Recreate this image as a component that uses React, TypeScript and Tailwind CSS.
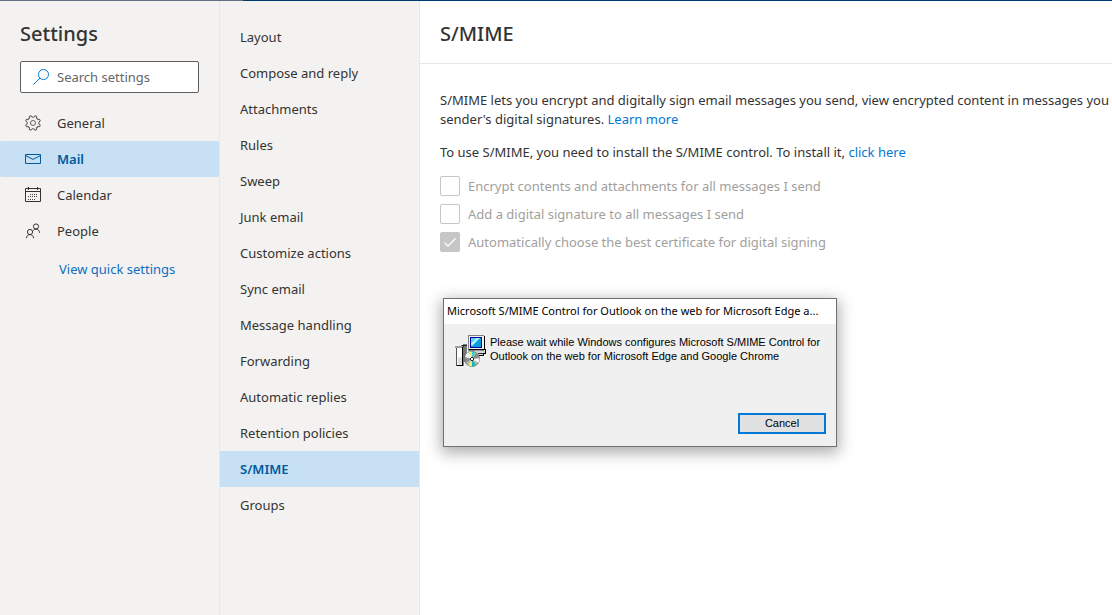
import React from 'react';

const categories = [
  { label: 'General', icon: <GearIcon /> },
  { label: 'Mail', icon: <MailIcon />, active: true },
  { label: 'Calendar', icon: <CalendarIcon /> },
  { label: 'People', icon: <PeopleIcon /> },
];

const sections = [
  'Layout',
  'Compose and reply',
  'Attachments',
  'Rules',
  'Sweep',
  'Junk email',
  'Customize actions',
  'Sync email',
  'Message handling',
  'Forwarding',
  'Automatic replies',
  'Retention policies',
  'S/MIME',
  'Groups',
];

const options = [
  { id: 'encrypt', label: 'Encrypt contents and attachments for all messages I send', checked: false },
  { id: 'sign', label: 'Add a digital signature to all messages I send', checked: false },
  { id: 'auto', label: 'Automatically choose the best certificate for digital signing', checked: true },
];

function GearIcon() {
  const teeth = [22.5, 67.5, 112.5, 157.5, 202.5, 247.5, 292.5, 337.5];
  return (
    <svg viewBox="0 0 16 16" className="size-4" fill="none" stroke="currentColor" aria-hidden="true">
      {teeth.map((a) => (
        <path key={a} transform={`rotate(${a} 8 8)`} d="M5.600 2.200 L6.600 2.500 L7 0.500 H9 L9.400 2.500 L10.400 2.200" strokeWidth="0.750" />
      ))}
      <circle cx="8" cy="8" r="2.500" strokeWidth="0.750" />
    </svg>
  );
}

function MailIcon() {
  return (
    <svg viewBox="0 0 16 16" className="size-4" fill="none" stroke="currentColor" aria-hidden="true">
      <path d="M0.500 3.500h15v9H0.500z" />
      <path d="M0.500 4.500 L8 8.400 L15.500 4.500" />
    </svg>
  );
}

function CalendarIcon() {
  return (
    <svg viewBox="0 0 16 16" className="size-4" fill="none" stroke="currentColor" aria-hidden="true">
      <path d="M0.500 1.500h15v13H0.500zM0.500 4.500h15M3.500 0v3M12.500 0v3" />
      <path d="M5 7.500h8M3 9.500h10M3 12.500h8" strokeDasharray="1 1" strokeWidth="0.900" />
    </svg>
  );
}

function PeopleIcon() {
  return (
    <svg viewBox="0 0 16 16" className="size-4" fill="none" stroke="currentColor" aria-hidden="true">
      <circle cx="11" cy="3.500" r="2.600" />
      <circle cx="5" cy="9" r="2.600" />
      <path d="M1.500 15.200c0-2.200 1.500-3.600 3.500-3.600s3.500 1.400 3.500 3.600M8 7.600c.7-1 1.700-1.500 3-1.500 2 0 3.500 1.500 3.500 3.700" />
    </svg>
  );
}

function SearchIcon() {
  return (
    <svg viewBox="0 0 16 16" className="size-4 shrink-0 text-[#0078d4]" fill="none" stroke="currentColor" aria-hidden="true">
      <circle cx="10.500" cy="5.500" r="5" />
      <path d="M7 9 L0.500 15.500" />
    </svg>
  );
}

function InstallerIcon() {
  return (
    <svg viewBox="0 0 32 32" className="size-8 shrink-0" shapeRendering="crispEdges" aria-hidden="true">
      <path d="M6 10h2V9h4v18H9v4H2V13H0v-2h6z" fill="#808080" />
      <path d="M0 11h8v2H0z" fill="#a0a0a0" />
      <path d="M7 10h5v1H7zM8 11h1v1H8zM10 12h1v1h-1z" fill="#222" />
      <path d="M7 12h1v19H2v-1h5z" fill="#000" />
      <path d="M2 13h5v17H2z" fill="#fff" />
      <path d="M1 13h1v18H1z" fill="#555" />
      <path d="M3 22h1v1h1v-1h1v1h1v7H6v-1H5v1H4v-1H3z" fill="#dcdcdc" />
      <path d="M8 12h3v15H8z" fill="#777" />
      <path d="M13 0h16v16H13z" fill="#808080" />
      <path d="M14 1h15v14H14z" fill="#f2f2f2" />
      <path d="M29 1h1v14H14v-1h15z" fill="#000" />
      <path d="M15 2h12v11H15z" fill="#0000a0" />
      <path d="M16 3h10v9H16z" fill="#0a9bdc" />
      <path d="M16 3h9v1h-1v1h-1v1h-1v1h-1v1h-1v1h-1v1h-1v1h-2z" fill="#52d3fa" />
      <path d="M21 3h3v1h-1v1h-1v1h-1v1h-1v1h-1v1h-1v1h-2V8h1V7h1V6h1V5h1V4h1z" fill="#b5f0ff" />
      <path d="M20 15h7v2h-7z" fill="#9a9a9a" />
      <path d="M13 16h17v4H13z" fill="#d5d5d5" />
      <path d="M30 14h1v5h-2v2h-9v-1h8v-2h2z" fill="#000" />
      <path d="M23 18h5v1h-5z" fill="#333" />
      <g shapeRendering="auto">
        <circle cx="17" cy="24" r="7.500" fill="#b4b4b4" stroke="#666" strokeWidth="0.800" />
        <path d="M17 24L13.500 17.200A7.500 7.500 0 0 1 17 16.500z" fill="#e9ec70" />
        <path d="M17 24L17 16.500A7.500 7.500 0 0 1 20.500 17.300z" fill="#40ccc8" />
        <path d="M17 24L10 21.500A7.500 7.500 0 0 1 13.500 17.200z" fill="#f4f4f4" />
        <path d="M17 24L10.500 27.500A7.500 7.500 0 0 1 9.500 23z" fill="#888" />
        <path d="M17 24L17 31.400A7.500 7.500 0 0 1 13 30.300z" fill="#e9ec70" />
        <path d="M17 24L21 30.300A7.500 7.500 0 0 1 17 31.400z" fill="#16b8bb" />
        <path d="M17 24L24.400 23.500A7.500 7.500 0 0 1 23.500 27.800z" fill="#fafafa" />
        <path d="M17 24L21.500 18A7.500 7.500 0 0 1 24.400 22.500z" fill="#8b8b8b" />
      </g>
      <path d="M16 22h2v1h1v2h-1v1h-2v-1h-1v-2h1z" fill="#222" />
      <path d="M16 23h2v2h-2z" fill="#fff" />
    </svg>
  );
}

function InstallerDialog() {
  return (
    <section
      role="dialog"
      aria-labelledby="installer-title"
      className="absolute left-[443px] top-[298px] flex w-[394px] flex-col border border-[#707070] bg-[#f0f0f0] text-black shadow-[0_4px_14px_2px_rgba(0,0,0,0.32)]"
    >
      <h2 id="installer-title" className="h-[25px] whitespace-nowrap bg-white px-[3px] font-['Noto_Sans','Open_Sans',sans-serif] text-[11px] leading-[23px]">
        Microsoft S/MIME Control for Outlook on the web for Microsoft Edge a...
      </h2>
      <div className="flex gap-[3px] px-[11px] pt-[11px] font-['Liberation_Sans',Arial,sans-serif]">
        <InstallerIcon />
        <p className="whitespace-nowrap text-[11px] leading-[14px]">
          Please wait while Windows configures Microsoft S/MIME Control for
          <br />
          Outlook on the web for Microsoft Edge and Google Chrome
        </p>
      </div>
      <div className="flex justify-end px-[10px] pb-3 pt-[46px]">
        <button type="button" className="h-[21px] w-[88px] border-2 border-[#0078d7] bg-[#e1e1e1] font-['Liberation_Sans',Arial,sans-serif] text-[11px] leading-[17px]">
          Cancel
        </button>
      </div>
    </section>
  );
}

export default function App() {
  return (
    <div className="relative flex min-h-screen flex-col overflow-hidden bg-white font-['Noto_Sans','Open_Sans',sans-serif] text-[13px] leading-[19px] text-[#333]">
      <div className="flex h-px">
        <div className="w-[243px] bg-[#5f7085]" />
        <div className="flex-1 bg-[#003a6e]" />
      </div>
      <div className="flex flex-1">
        <aside className="flex w-[220px] shrink-0 flex-col border-r border-[#eae8e6] bg-[#f3f2f1]">
          <h1 className="px-5 pt-[21px] text-[20px] font-medium leading-6">Settings</h1>
          <div className="mx-5 mt-[15px] flex h-8 items-center gap-2 rounded-xs border border-[#605e5c] bg-white pl-3">
            <SearchIcon />
            <input
              type="text"
              aria-label="Search settings"
              placeholder="Search settings"
              className="w-full min-w-0 bg-transparent outline-none placeholder:text-[#666]"
            />
          </div>
          <nav aria-label="Categories" className="mt-3 flex flex-col">
            {categories.map((c) => (
              <button
                key={c.label}
                type="button"
                className={
                  c.active
                    ? 'flex h-9 items-center gap-4 rounded-xs bg-[#c7e0f4] pl-[25px] font-semibold text-[#005a9e]'
                    : 'flex h-9 items-center gap-4 pl-[25px]'
                }
              >
                {c.icon}
                {c.label}
              </button>
            ))}
          </nav>
          <a href="#quick" className="mt-[11px] pl-[59px] text-[#106ebe]">
            View quick settings
          </a>
        </aside>

        <nav aria-label="Mail settings" className="flex w-[200px] shrink-0 flex-col border-r border-[#eae8e6] bg-[#f3f2f1] pt-[18px]">
          {sections.map((s) => (
            <button
              key={s}
              type="button"
              className={
                s === 'S/MIME'
                  ? 'h-9 bg-[#c7e0f4] px-5 text-left font-semibold text-[#005a9e]'
                  : 'h-9 px-5 text-left'
              }
            >
              {s}
            </button>
          ))}
        </nav>

        <main className="min-w-0 flex-1 overflow-hidden">
          <header className="border-b border-[#eae8e6] px-5 pb-[17px] pt-[21px]">
            <h2 className="text-[20px] font-medium leading-6">S/MIME</h2>
          </header>
          <div className="whitespace-nowrap px-5 pt-[27px]">
            <p>
              S/MIME lets you encrypt and digitally sign email messages you send, view encrypted content in messages you
              <br />
              sender's digital signatures.{' '}
              <a href="#learn" className="text-[#0078d4]">Learn more</a>
            </p>
            <p className="mt-[14px]">
              To use S/MIME, you need to install the S/MIME control. To install it,{' '}
              <a href="#install" className="text-[#0078d4]">click here</a>
            </p>
            <div className="mt-[14px] flex flex-col gap-2">
              {options.map((o) => (
                <div key={o.id} className="flex h-5 items-center gap-2">
                  <div className="grid size-5 place-items-center">
                    <input
                      id={o.id}
                      type="checkbox"
                      disabled
                      defaultChecked={o.checked}
                      className="col-start-1 row-start-1 size-5 appearance-none rounded-xs border border-[#c8c6c4] bg-white checked:bg-[#c8c6c4]"
                    />
                    {o.checked && (
                      <svg viewBox="0 0 14 14" className="pointer-events-none col-start-1 row-start-1 size-[14px]" fill="none" stroke="#fff" strokeWidth="1.300" aria-hidden="true">
                        <path d="M1.500 7.500 L5 11 L12.500 3.500" />
                      </svg>
                    )}
                  </div>
                  <label htmlFor={o.id} className="text-[#a19f9d]">{o.label}</label>
                </div>
              ))}
            </div>
          </div>
        </main>
      </div>
      <InstallerDialog />
    </div>
  );
}
